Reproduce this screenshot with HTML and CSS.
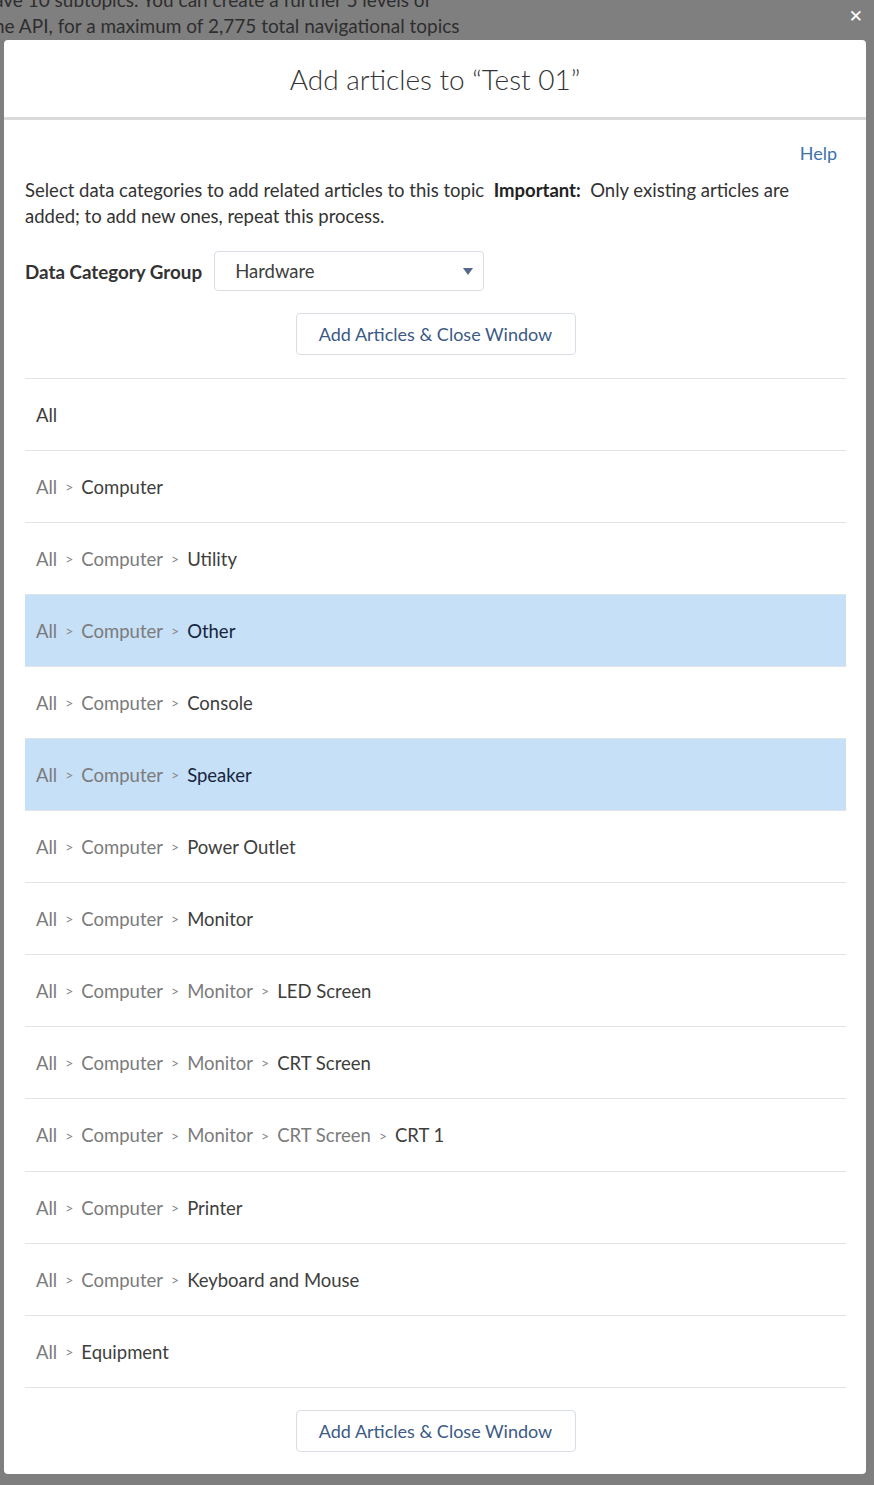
FILE: index.html
```html
<!DOCTYPE html>
<html>
<head>
  <title>Add articles to “Test 01”</title>
  <link rel="stylesheet" href="styles.css">
</head>
<body>
  <div class="behind">
    <p>ave 10 subtopics. You can create a further 5 levels of</p>
    <p>he API, for a maximum of 2,775 total navigational topics</p>
  </div>
  <div class="close">&#x2715;</div>

  <div class="modal">
    <div class="modal-header">
      <h2>Add articles to “Test 01”</h2>
    </div>
    <div class="modal-body">
      <div class="help-row"><a class="help" href="#">Help</a></div>
      <p class="intro">Select data categories to add related articles to this topic&nbsp; <b>Important:</b>&nbsp; Only existing articles are added; to add new ones, repeat this process.</p>

      <div class="group-row">
        <label>Data Category Group</label>
        <div class="select">
          <span>Hardware</span>
          <span class="caret"></span>
        </div>
      </div>

      <div class="actions">
        <button>Add Articles &amp; Close Window</button>
      </div>

      <ul class="categories">
        <li><span class="last">All</span></li>
        <li><span>All</span><i>&gt;</i><span class="last">Computer</span></li>
        <li><span>All</span><i>&gt;</i><span>Computer</span><i>&gt;</i><span class="last">Utility</span></li>
        <li class="selected"><span>All</span><i>&gt;</i><span>Computer</span><i>&gt;</i><span class="last">Other</span></li>
        <li><span>All</span><i>&gt;</i><span>Computer</span><i>&gt;</i><span class="last">Console</span></li>
        <li class="selected"><span>All</span><i>&gt;</i><span>Computer</span><i>&gt;</i><span class="last">Speaker</span></li>
        <li><span>All</span><i>&gt;</i><span>Computer</span><i>&gt;</i><span class="last">Power Outlet</span></li>
        <li><span>All</span><i>&gt;</i><span>Computer</span><i>&gt;</i><span class="last">Monitor</span></li>
        <li><span>All</span><i>&gt;</i><span>Computer</span><i>&gt;</i><span>Monitor</span><i>&gt;</i><span class="last">LED Screen</span></li>
        <li><span>All</span><i>&gt;</i><span>Computer</span><i>&gt;</i><span>Monitor</span><i>&gt;</i><span class="last">CRT Screen</span></li>
        <li><span>All</span><i>&gt;</i><span>Computer</span><i>&gt;</i><span>Monitor</span><i>&gt;</i><span>CRT Screen</span><i>&gt;</i><span class="last">CRT 1</span></li>
        <li><span>All</span><i>&gt;</i><span>Computer</span><i>&gt;</i><span class="last">Printer</span></li>
        <li><span>All</span><i>&gt;</i><span>Computer</span><i>&gt;</i><span class="last">Keyboard and Mouse</span></li>
        <li><span>All</span><i>&gt;</i><span class="last">Equipment</span></li>
      </ul>

      <div class="actions bottom">
        <button>Add Articles &amp; Close Window</button>
      </div>
    </div>
  </div>
</body>
</html>
```

FILE: styles.css
```css
body {
  margin: 0;
  background: #7f7f7f;
  font-family: Lato, "Open Sans", sans-serif;
  color: #3e3e3c;
  min-height: 1485px;
}
.behind {
  position: absolute;
  top: -13px;
  left: -6px;
  color: #2e2e2e;
  font-size: 19px;
}
.behind p {
  margin: 0;
  line-height: 26px;
}
.close {
  position: absolute;
  top: 6px;
  right: 11px;
  color: #fff;
  font-size: 17px;
  font-family: "DejaVu Sans", sans-serif;
}
.modal {
  position: relative;
  margin: 40px 8px 0 4px;
  background: #fff;
  border-radius: 4px;
  height: 1434px;
  box-sizing: border-box;
}
.modal-header {
  height: 77px;
  border-bottom: 3px solid #dadada;
  display: flex;
  align-items: center;
  justify-content: center;
}
.modal-header h2 {
  margin: 0;
  font-size: 28px;
  font-weight: 300;
  color: #333;
}
.modal-body {
  padding: 0 20px 23px 21px;
}
.help-row {
  display: flex;
  justify-content: flex-end;
  padding: 22px 9px 0 0;
}
.help {
  color: #3b73ab;
  text-decoration: none;
  font-size: 18px;
}
.intro {
  margin: 13px 0 0;
  font-size: 18.5px;
  line-height: 26px;
  color: #333;
}
.intro b {
  color: #222;
}
.group-row {
  display: flex;
  align-items: center;
  gap: 12px;
  margin-top: 22px;
}
.group-row label {
  font-weight: bold;
  font-size: 18.8px;
  color: #333;
}
.select {
  width: 270px;
  height: 40px;
  box-sizing: border-box;
  border: 1px solid #d8dde6;
  border-radius: 4px;
  display: flex;
  align-items: center;
  justify-content: space-between;
  padding: 0 10px 0 20px;
  font-size: 18.5px;
}
.caret {
  width: 0;
  height: 0;
  border-left: 5px solid transparent;
  border-right: 5px solid transparent;
  border-top: 7px solid #54698d;
}
.actions {
  display: flex;
  justify-content: center;
  padding: 22px 0 23px;
}
.actions button {
  width: 280px;
  height: 42px;
  background: #fff;
  border: 1px solid #d8dde6;
  border-radius: 4px;
  font-family: Lato, "Open Sans", sans-serif;
  font-size: 18px;
  color: #3b5a85;
}
.actions.bottom {
  padding: 22px 0 0;
}
.categories {
  list-style: none;
  margin: 0;
  padding: 0;
  border-top: 1px solid #e0e3e8;
}
.categories li {
  height: 71px;
  border-bottom: 1px solid #e0e3e8;
  display: flex;
  align-items: center;
  padding-left: 11px;
  font-size: 18.5px;
  color: #7b7b7b;
}
.categories li:nth-child(11) {
  height: 72px;
}
.categories li.selected {
  background: #c6e0f8;
}
.categories i {
  font-style: normal;
  font-size: 14px;
  margin: 0 8px;
  color: #888;
}
.categories .last {
  color: #3e3e3c;
}
.categories li.selected .last {
  color: #16253d;
}
```
